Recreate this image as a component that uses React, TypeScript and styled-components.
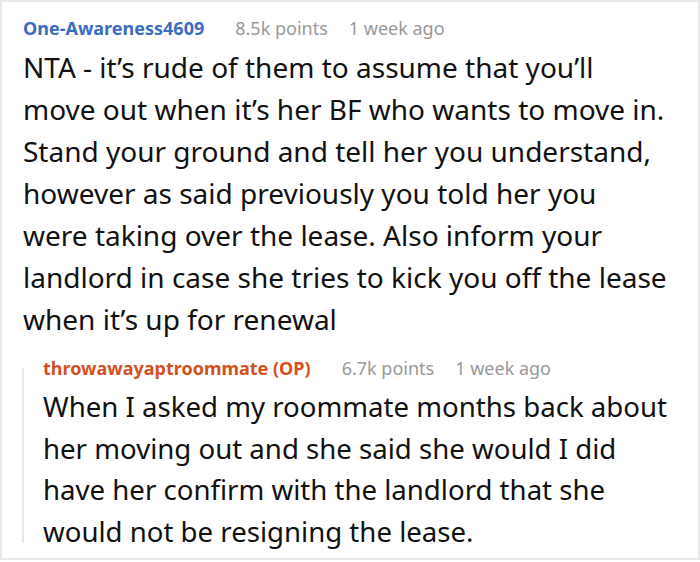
import React from "react";
import styled, { createGlobalStyle } from "styled-components";

const Global = createGlobalStyle`
  html, body { margin: 0; padding: 0; background: #fff; }
  body { font-family: "Noto Sans", "Open Sans", sans-serif; }
`;

const Card = styled.div`
  width: 700px;
  height: 560px;
  box-sizing: border-box;
  border: 2px solid #e8e8e8;
  padding: 14px 8px 0 21px;
  overflow: hidden;
`;

const Comment = styled.div`
  display: flex;
  flex-direction: column;
  gap: 6px;
`;

const Reply = styled(Comment)`
  position: relative;
  margin-top: 16px;
  padding-left: 20px;

  &::before {
    content: "";
    position: absolute;
    left: -1px;
    top: 12px;
    bottom: 10px;
    width: 2px;
    background: #e6e6e6;
  }
`;

const Header = styled.div`
  display: flex;
  align-items: baseline;
  gap: 21px;
  font-size: 18px;
  line-height: 24px;
  white-space: nowrap;
`;

const Author = styled.span<{ $color: string }>`
  font-weight: 700;
  color: ${(p) => p.$color};
  margin-right: 10px;
`;

const Meta = styled.span`
  color: #999999;
`;

const Body = styled.p<{ $lh: number; $size: number }>`
  margin: 0;
  font-size: ${(p) => p.$size}px;
  line-height: ${(p) => p.$lh}px;
  color: #111111;
`;

const Line = styled.span`
  display: block;
  white-space: nowrap;
`;

const firstLines = [
  "NTA - it’s rude of them to assume that you’ll",
  "move out when it’s her BF who wants to move in.",
  "Stand your ground and tell her you understand,",
  "however as said previously you told her you",
  "were taking over the lease. Also inform your",
  "landlord in case she tries to kick you off the lease",
  "when it’s up for renewal",
];

const replyLines = [
  "When I asked my roommate months back about",
  "her moving out and she said she would I did",
  "have her confirm with the landlord that she",
  "would not be resigning the lease.",
];

export default function App() {
  return (
    <>
      <Global />
      <Card>
        <Comment>
          <Header>
            <Author $color="#3b6cc0">One-Awareness4609</Author>
            <Meta>8.5k points</Meta>
            <Meta>1 week ago</Meta>
          </Header>
          <Body $lh={42} $size={28}>
            {firstLines.map((l) => (
              <Line key={l}>{l}</Line>
            ))}
          </Body>
        </Comment>
        <Reply>
          <Header>
            <Author $color="#d5501f">throwawayaptroommate (OP)</Author>
            <Meta>6.7k points</Meta>
            <Meta>1 week ago</Meta>
          </Header>
          <Body $lh={41.7} $size={27.6}>
            {replyLines.map((l) => (
              <Line key={l}>{l}</Line>
            ))}
          </Body>
        </Reply>
      </Card>
    </>
  );
}
